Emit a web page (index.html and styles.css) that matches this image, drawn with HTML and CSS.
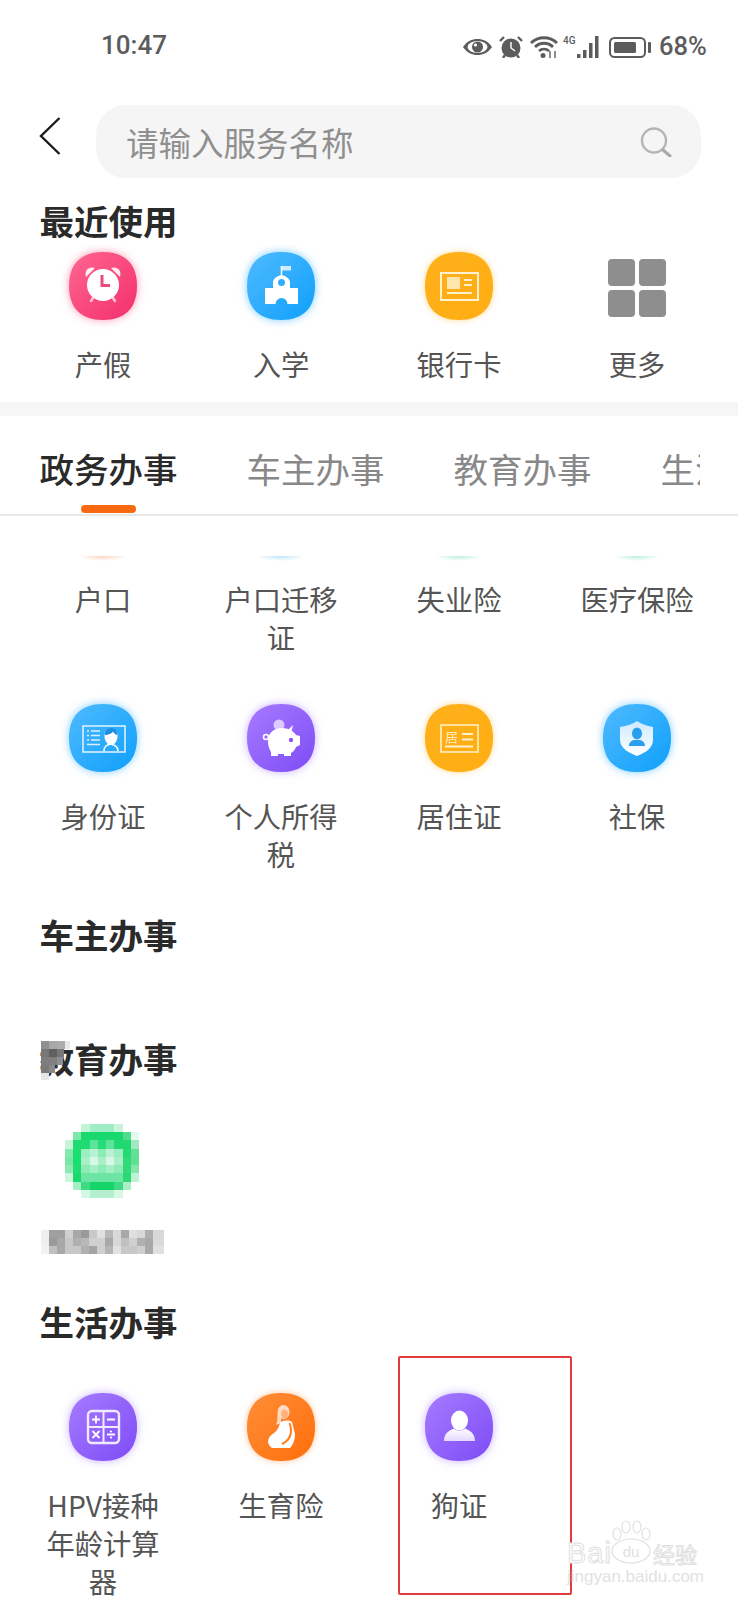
FILE: index.html
```html
<!DOCTYPE html>
<html lang="zh">
<head>
<meta charset="utf-8">
<title>服务</title>
<link rel="stylesheet" href="styles.css">
</head>
<body>
<svg class="defs" width="0" height="0" aria-hidden="true">
  <defs>
    <linearGradient id="gPink" x1="0" y1="0" x2="1" y2="1"><stop offset="0" stop-color="#ff6690"/><stop offset="1" stop-color="#f22f6c"/></linearGradient>
    <linearGradient id="gBlue" x1="0" y1="0" x2="1" y2="1"><stop offset="0" stop-color="#4fbaff"/><stop offset="1" stop-color="#0fa0fb"/></linearGradient>
    <linearGradient id="gYellow" x1="0" y1="0" x2="1" y2="1"><stop offset="0" stop-color="#ffb01a"/><stop offset="1" stop-color="#ffae12"/></linearGradient>
    <linearGradient id="gPurple" x1="0" y1="0" x2="1" y2="1"><stop offset="0" stop-color="#a67bff"/><stop offset="1" stop-color="#7e4cf6"/></linearGradient>
    <linearGradient id="gOrange" x1="0" y1="0" x2="1" y2="1"><stop offset="0" stop-color="#ff8e38"/><stop offset="1" stop-color="#ff6e0a"/></linearGradient>
    <linearGradient id="gPale" x1="0" y1="0" x2="0" y2="1"><stop offset="0" stop-color="#ffffff"/><stop offset="1" stop-color="#e3d8ff"/></linearGradient>
    <linearGradient id="gShield" x1="0" y1="0" x2="0" y2="1"><stop offset="0" stop-color="#cfeaff"/><stop offset="1" stop-color="#ffffff"/></linearGradient>
    <path id="blob" d="M34 0C56 0 68 12 68 34C68 56 56 68 34 68C12 68 0 56 0 34C0 12 12 0 34 0Z"/>
  </defs>
</svg>

<div class="page">
  <header class="status">
    <span class="time">10:47</span>
    <div class="status-icons">
      <svg class="si-eye" viewBox="0 0 29 16"><path d="M0 8C4 2 9 0 14.500 0S25 2 29 8C25 14 20 16 14.500 16S4 14 0 8Z" fill="#5c5c5c"/><ellipse cx="14.500" cy="8" rx="10" ry="6" fill="#fff"/><circle cx="14.500" cy="8" r="5.500" fill="#5c5c5c"/><circle cx="12.500" cy="6" r="1.600" fill="#fff"/></svg>
      <svg class="si-alarm" viewBox="0 0 24 22"><circle cx="12" cy="12" r="9.500" fill="#5c5c5c"/><path d="M12 6V12L16 15" fill="none" stroke="#fff" stroke-width="1.400"/><path d="M1 5L5 1M23 5L19 1M6 19L4 22M18 19L20 22" stroke="#5c5c5c" stroke-width="2.400" fill="none"/></svg>
      <svg class="si-wifi" viewBox="0 0 28 22"><path d="M1 7C8 0 20 0 27 7M5 11C10 6 18 6 23 11M9 15C12 12.500 16 12.500 19 15" fill="none" stroke="#5c5c5c" stroke-width="2.800"/><circle cx="13" cy="19.500" r="2.500" fill="#5c5c5c"/><path d="M20 22V15M25 22V15" stroke="#5c5c5c" stroke-width="1.400"/></svg>
      <div class="si-net">
        <span class="net-label">4G</span>
        <svg class="si-bars" viewBox="0 0 24 22"><path d="M1 18h3.500v4H1zM7 14h3.500v8H7zM13 7h3.500v15H13zM19 0h3.500v22H19z" fill="#5c5c5c"/></svg>
      </div>
      <svg class="si-batt" viewBox="0 0 42 21"><rect x="1" y="1" width="35" height="19" rx="4.500" fill="none" stroke="#5c5c5c" stroke-width="2"/><rect x="5" y="5" width="22" height="11" rx="1.500" fill="#5c5c5c"/><rect x="39" y="5" width="3" height="11" rx="1" fill="#5c5c5c"/></svg>
      <span class="pct">68%</span>
    </div>
  </header>

  <div class="search-row">
    <svg class="back" viewBox="0 0 22 38"><path d="M20.500 1L2 19L20.500 37" fill="none" stroke="#1c1c1c" stroke-width="2.400"/></svg>
    <div class="search">
      <span class="placeholder">请输入服务名称</span>
      <svg class="search-ic" viewBox="0 0 32 30"><circle cx="14" cy="13.500" r="12" fill="none" stroke="#b4b4b4" stroke-width="2.400"/><path d="M23 23L30 29" stroke="#a8a8a8" stroke-width="3" stroke-linecap="round"/></svg>
    </div>
  </div>

  <h2 class="heading heading-recent">最近使用</h2>
  <div class="grid grid-recent">
    <div class="item">
      <svg class="icon glow-pink" viewBox="0 0 68 68"><use href="#blob" fill="url(#gPink)"/>
        <path d="M17 25C15 18 20 14 26 16ZM51 25C53 18 48 14 42 16Z" fill="#fff" opacity=".9"/>
        <path d="M24 46L22 49M44 46L46 49" stroke="#ffc3d5" stroke-width="2.600" stroke-linecap="round"/>
        <circle cx="34" cy="33" r="16" fill="#fff"/>
        <path d="M33 23V33.500H41" fill="none" stroke="#ea4c7c" stroke-width="3"/></svg>
      <span class="label">产假</span>
    </div>
    <div class="item">
      <svg class="icon glow-blue" viewBox="0 0 68 68"><use href="#blob" fill="url(#gBlue)"/>
        <path d="M35 14H44V18.500H35Z" fill="#cfeaff"/><path d="M34.500 14V24" stroke="#fff" stroke-width="1.600"/>
        <path d="M18 36H26V30C26 27 30 24 34.500 23C39 24 43 27 43 30V36H51V52H40.500A6 6 0 0 0 28.500 52H18Z" fill="#fff"/>
        <circle cx="34.500" cy="30.500" r="3.500" fill="#35adfd"/></svg>
      <span class="label">入学</span>
    </div>
    <div class="item">
      <svg class="icon glow-yellow" viewBox="0 0 68 68"><use href="#blob" fill="url(#gYellow)"/>
        <rect x="16" y="21" width="37" height="27" fill="none" stroke="#fff1cf" stroke-width="2"/>
        <rect x="22" y="25" width="13" height="12" fill="#ffe6ad"/>
        <path d="M39 28H47M39 33H47M22 41H47" stroke="#fff1cf" stroke-width="2.200"/></svg>
      <span class="label">银行卡</span>
    </div>
    <div class="item">
      <svg class="icon" viewBox="0 0 68 68"><g fill="#8e8e8e"><rect x="5" y="7" width="27" height="27" rx="4"/><rect x="36" y="7" width="27" height="27" rx="4"/><rect x="5" y="38" width="27" height="27" rx="4"/><rect x="36" y="38" width="27" height="27" rx="4"/></g></svg>
      <span class="label">更多</span>
    </div>
  </div>

  <div class="band"></div>

  <nav class="tabs">
    <div class="tab tab-on"><span>政务办事</span><i class="tab-bar"></i></div>
    <div class="tab"><span>车主办事</span></div>
    <div class="tab"><span>教育办事</span></div>
    <div class="tab"><span>生活办事</span></div>
  </nav>

  <div class="grid grid-slivers">
    <i class="sliver sliver-orange"></i>
    <i class="sliver sliver-blue"></i>
    <i class="sliver sliver-green"></i>
    <i class="sliver sliver-green"></i>
  </div>

  <div class="grid grid-labels">
    <div class="item"><span class="label">户口</span></div>
    <div class="item"><span class="label">户口迁移证</span></div>
    <div class="item"><span class="label">失业险</span></div>
    <div class="item"><span class="label">医疗保险</span></div>
  </div>

  <div class="grid grid-gov">
    <div class="item">
      <svg class="icon glow-blue" viewBox="0 0 68 68"><use href="#blob" fill="url(#gBlue)"/>
        <rect x="14" y="22" width="42" height="26" fill="none" stroke="#d9f0ff" stroke-width="1.600"/>
        <path d="M18 27H20M22 27H31M18 31.500H20M22 31.500H31M18 36H20M22 36H31M18 40.500H31" stroke="#d9f0ff" stroke-width="1.600"/>
        <path d="M35 47C35 42 38 41 41.500 40C45 41 49 42 49 47" fill="none" stroke="#fff" stroke-width="1.600"/>
        <path d="M35.500 32C35.500 26 38 24.500 42 24.500S48.500 27 48.500 32C48.500 37 45.500 41 42 41S35.500 37 35.500 32Z" fill="#fff"/>
        <path d="M36 31C39 31 43 29.500 44 27.500C45 29.500 47 31 48 31C48.500 26 46 24 42 24S35.500 26.500 36 31Z" fill="#1d8fe0"/></svg>
      <span class="label">身份证</span>
    </div>
    <div class="item">
      <svg class="icon glow-purple" viewBox="0 0 68 68"><use href="#blob" fill="url(#gPurple)"/>
        <circle cx="32" cy="21" r="5.500" fill="#dccbff"/>
        <path d="M44 30L46 21L40 27Z" fill="#fff"/>
        <circle cx="19" cy="33" r="2.500" fill="none" stroke="#fff" stroke-width="1.500"/>
        <path d="M21 37C21 29 27 24 35 24C43 24 47 28 49 31L53 32V41L49 43C48 46 46 48 44 49V52H37V50H31V52H24V48C22 45 21 41 21 37Z" fill="#fff"/>
        <circle cx="44" cy="36" r="2.200" fill="#8a58f5"/></svg>
      <span class="label">个人所得税</span>
    </div>
    <div class="item">
      <svg class="icon glow-yellow" viewBox="0 0 68 68"><use href="#blob" fill="url(#gYellow)"/>
        <rect x="16" y="21" width="37" height="27" fill="none" stroke="#ffeec4" stroke-width="1.600"/>
        <text class="ic-text" x="20" y="38">居</text>
        <path d="M37 30H48M37 35.500H48M20 42.500H48" stroke="#fff1cf" stroke-width="1.800"/></svg>
      <span class="label">居住证</span>
    </div>
    <div class="item">
      <svg class="icon glow-blue" viewBox="0 0 68 68"><use href="#blob" fill="url(#gBlue)"/>
        <path d="M34 17C38 20 44 22 50 23V36C50 44 42 49 34 52C26 49 17 44 17 36V23C24 22 30 20 34 17Z" fill="url(#gShield)"/>
        <ellipse cx="34" cy="29.500" rx="5" ry="6" fill="#2a9ff0"/>
        <path d="M26 42C26 38 29 36.500 31 36H37C39 36.500 42 38 42 42Z" fill="#2a9ff0"/></svg>
      <span class="label">社保</span>
    </div>
  </div>

  <h2 class="heading heading-car">车主办事</h2>

  <h2 class="heading heading-edu">教育办事
    <svg class="mosaic-head" viewBox="0 0 32 40" shape-rendering="crispEdges" aria-hidden="true">
      <rect x="0" y="0" width="8" height="8" fill="#909090"/><rect x="8" y="0" width="8" height="8" fill="#a8a8a8"/><rect x="16" y="0" width="8" height="8" fill="#adadad"/><rect x="24" y="0" width="5" height="8" fill="#e8e8e8"/>
      <rect x="0" y="8" width="8" height="8" fill="#777"/><rect x="8" y="8" width="8" height="8" fill="#5f5f5f"/><rect x="16" y="8" width="7" height="8" fill="#777"/>
      <rect x="0" y="16" width="8" height="8" fill="#7e7e7e"/><rect x="8" y="16" width="8" height="8" fill="#808080"/><rect x="16" y="16" width="6" height="8" fill="#8e8e8e"/>
      <rect x="0" y="24" width="8" height="8" fill="#7a7a7a"/><rect x="8" y="24" width="6" height="8" fill="#8a8a8a"/>
      <rect x="0" y="32" width="8" height="7" fill="#e6e6e6"/>
    </svg>
  </h2>
  <div class="grid grid-edu">
    <div class="item">
      <svg class="mosaic-ic" viewBox="0 0 72 72" shape-rendering="crispEdges" role="img" aria-label="已打码的图标">
        <rect x="16" y="0" width="8" height="8" fill="#c2f5d8"/><rect x="24" y="0" width="24" height="8" fill="#a0ecc4"/><rect x="48" y="0" width="8" height="8" fill="#c8f5da"/>
        <rect x="8" y="8" width="8" height="8" fill="#7ee8a8"/><rect x="16" y="8" width="40" height="8" fill="#18d86e"/><rect x="56" y="8" width="8" height="8" fill="#4fdd8d"/><rect x="64" y="8" width="8" height="8" fill="#e4f9ee"/>
        <rect x="0" y="16" width="8" height="8" fill="#c8f5da"/><rect x="8" y="16" width="16" height="8" fill="#1fdc72"/><rect x="24" y="16" width="8" height="8" fill="#5ce49a"/><rect x="32" y="16" width="8" height="8" fill="#25dd78"/><rect x="40" y="16" width="8" height="8" fill="#5ce49a"/><rect x="48" y="16" width="16" height="8" fill="#22d872"/><rect x="64" y="16" width="8" height="8" fill="#9eeabe"/>
        <rect x="0" y="24" width="8" height="8" fill="#85e8ae"/><rect x="8" y="24" width="8" height="8" fill="#19de70"/><rect x="16" y="24" width="8" height="8" fill="#9aeebf"/><rect x="24" y="24" width="8" height="8" fill="#b8f2d2"/><rect x="32" y="24" width="8" height="8" fill="#8eecb8"/><rect x="40" y="24" width="8" height="8" fill="#b8f2d2"/><rect x="48" y="24" width="8" height="8" fill="#9aeebf"/><rect x="56" y="24" width="8" height="8" fill="#25d973"/><rect x="64" y="24" width="8" height="8" fill="#63e094"/>
        <rect x="0" y="32" width="8" height="8" fill="#7ae6a6"/><rect x="8" y="32" width="8" height="8" fill="#19de70"/><rect x="16" y="32" width="8" height="8" fill="#a8efc8"/><rect x="24" y="32" width="8" height="8" fill="#d8f8e6"/><rect x="32" y="32" width="8" height="8" fill="#a8efc8"/><rect x="40" y="32" width="8" height="8" fill="#d8f8e6"/><rect x="48" y="32" width="8" height="8" fill="#a8efc8"/><rect x="56" y="32" width="8" height="8" fill="#30d97a"/><rect x="64" y="32" width="8" height="8" fill="#5fe093"/>
        <rect x="0" y="40" width="8" height="8" fill="#8fe9b2"/><rect x="8" y="40" width="8" height="8" fill="#22dc74"/><rect x="16" y="40" width="8" height="8" fill="#8decb6"/><rect x="24" y="40" width="8" height="8" fill="#a5efc6"/><rect x="32" y="40" width="8" height="8" fill="#8decb6"/><rect x="40" y="40" width="8" height="8" fill="#a5efc6"/><rect x="48" y="40" width="8" height="8" fill="#8decb6"/><rect x="56" y="40" width="8" height="8" fill="#30d97a"/><rect x="64" y="40" width="8" height="8" fill="#85e5ab"/>
        <rect x="0" y="48" width="8" height="8" fill="#cdf6de"/><rect x="8" y="48" width="8" height="8" fill="#1ada6e"/><rect x="16" y="48" width="40" height="8" fill="#6de6a5"/><rect x="56" y="48" width="8" height="8" fill="#2bd876"/><rect x="64" y="48" width="8" height="8" fill="#bdf2d4"/>
        <rect x="8" y="56" width="8" height="8" fill="#a5efc4"/><rect x="16" y="56" width="8" height="8" fill="#3ddb83"/><rect x="24" y="56" width="24" height="8" fill="#15d569"/><rect x="48" y="56" width="8" height="8" fill="#3ddb83"/><rect x="56" y="56" width="8" height="8" fill="#aaeec8"/>
        <rect x="16" y="64" width="8" height="8" fill="#d4f8e3"/><rect x="24" y="64" width="24" height="8" fill="#b4f0cf"/><rect x="48" y="64" width="8" height="8" fill="#d8f8e6"/>
      </svg>
      <svg class="mosaic-txt" viewBox="0 0 123 24" shape-rendering="crispEdges" role="img" aria-label="已打码的文字">
        <rect x="0" y="0" width="8" height="8" fill="#efefef"/><rect x="8" y="0" width="16" height="8" fill="#a0a0a0"/><rect x="24" y="0" width="8" height="8" fill="#d0d0d0"/><rect x="32" y="0" width="8" height="8" fill="#a8a8a8"/><rect x="40" y="0" width="8" height="8" fill="#9a9a9a"/><rect x="48" y="0" width="8" height="8" fill="#c8c8c8"/><rect x="56" y="0" width="8" height="8" fill="#e0e0e0"/><rect x="64" y="0" width="8" height="8" fill="#b8b8b8"/><rect x="72" y="0" width="8" height="8" fill="#d8d8d8"/><rect x="80" y="0" width="8" height="8" fill="#a8a8a8"/><rect x="88" y="0" width="8" height="8" fill="#e0e0e0"/><rect x="96" y="0" width="8" height="8" fill="#d8d8d8"/><rect x="104" y="0" width="8" height="8" fill="#b0b0b0"/><rect x="112" y="0" width="11" height="8" fill="#d8d8d8"/>
        <rect x="0" y="8" width="8" height="8" fill="#efefef"/><rect x="8" y="8" width="8" height="8" fill="#9a9a9a"/><rect x="16" y="8" width="8" height="8" fill="#a8a8a8"/><rect x="24" y="8" width="8" height="8" fill="#c8c8c8"/><rect x="32" y="8" width="8" height="8" fill="#b0b0b0"/><rect x="40" y="8" width="8" height="8" fill="#b8b8b8"/><rect x="48" y="8" width="16" height="8" fill="#d0d0d0"/><rect x="64" y="8" width="8" height="8" fill="#a8a8a8"/><rect x="72" y="8" width="8" height="8" fill="#d8d8d8"/><rect x="80" y="8" width="8" height="8" fill="#c0c0c0"/><rect x="88" y="8" width="8" height="8" fill="#d0d0d0"/><rect x="96" y="8" width="8" height="8" fill="#b0b0b0"/><rect x="104" y="8" width="8" height="8" fill="#a8a8a8"/><rect x="112" y="8" width="11" height="8" fill="#dadada"/>
        <rect x="0" y="16" width="8" height="8" fill="#f2f2f2"/><rect x="8" y="16" width="8" height="8" fill="#c0c0c0"/><rect x="16" y="16" width="8" height="8" fill="#a8a8a8"/><rect x="24" y="16" width="16" height="8" fill="#c8c8c8"/><rect x="40" y="16" width="8" height="8" fill="#b0b0b0"/><rect x="48" y="16" width="8" height="8" fill="#a4a4a4"/><rect x="56" y="16" width="8" height="8" fill="#cfcfcf"/><rect x="64" y="16" width="8" height="8" fill="#b4b4b4"/><rect x="72" y="16" width="8" height="8" fill="#e2e2e2"/><rect x="80" y="16" width="16" height="8" fill="#c8c8c8"/><rect x="96" y="16" width="8" height="8" fill="#cfcfcf"/><rect x="104" y="16" width="8" height="8" fill="#a8a8a8"/><rect x="112" y="16" width="11" height="8" fill="#e0e0e0"/>
      </svg>
    </div>
  </div>

  <h2 class="heading heading-life">生活办事</h2>
  <div class="grid">
    <div class="item">
      <svg class="icon glow-purple" viewBox="0 0 68 68"><use href="#blob" fill="url(#gPurple)"/>
        <rect x="19" y="18" width="31" height="32" rx="4" fill="none" stroke="#f1eaff" stroke-width="2.400"/>
        <path d="M34.500 18V50M19 34H50" stroke="#f1eaff" stroke-width="2"/>
        <path d="M23 26.500H31M27 22.500V30.500M38 26.500H46M23.500 38L30.500 45M30.500 38L23.500 45M38 41.500H46" stroke="#fff" stroke-width="1.800"/>
        <circle cx="42" cy="38.500" r="1.100" fill="#fff"/><circle cx="42" cy="44.500" r="1.100" fill="#fff"/></svg>
      <span class="label">HPV接种年龄计算器</span>
    </div>
    <div class="item">
      <svg class="icon glow-orange" viewBox="0 0 68 68"><use href="#blob" fill="url(#gOrange)"/>
        <ellipse cx="36.500" cy="19" rx="6" ry="7" fill="#ffdcc3"/>
        <path d="M31 19C30 24 31 28 29 32L34 30V19Z" fill="#ffdcc3"/>
        <ellipse cx="37.500" cy="21" rx="3.500" ry="4.500" fill="#ffb27a"/>
        <path d="M33 30C36 27 42 27 45 29L48 41C48 47 46 52 43 55H25C19 51 20 44 27 40C30 38 32 34 33 30Z" fill="#fff"/>
        <path d="M42.500 30C46 40 43 47 35 51" fill="none" stroke="#ff7f20" stroke-width="2"/></svg>
      <span class="label">生育险</span>
    </div>
    <div class="item">
      <svg class="icon glow-purple" viewBox="0 0 68 68"><use href="#blob" fill="url(#gPurple)"/>
        <ellipse cx="34.500" cy="27.500" rx="8.500" ry="10" fill="#fff"/>
        <path d="M19 48C19 41 23 38 29 35.500C32 38.500 37 38.500 40 35.500C46 38 50 41 50 48Z" fill="url(#gPale)"/></svg>
      <span class="label">狗证</span>
    </div>
  </div>

  <div class="highlight"></div>
  <div class="watermark">
    <span class="wm-bai">Bai</span>
    <svg class="wm-paw" viewBox="0 0 44 44"><g fill="#fff" stroke="#e0e0e0" stroke-width="1.200"><ellipse cx="8" cy="14" rx="4" ry="6"/><ellipse cx="17" cy="7" rx="4" ry="6"/><ellipse cx="28" cy="7" rx="4" ry="6"/><ellipse cx="37" cy="14" rx="4" ry="6"/><ellipse cx="22" cy="31" rx="19" ry="12"/></g><text class="wm-du" x="22" y="37" text-anchor="middle">du</text></svg>
    <span class="wm-jy">经验</span>
    <span class="wm-url">jingyan.baidu.com</span>
  </div>
</div>
</body>
</html>
```

FILE: styles.css
```css
* { box-sizing: border-box; }
html, body { margin: 0; padding: 0; background: #fff; }
body { font-family: "Noto Sans CJK SC", "Noto Sans", sans-serif; color: #555; }
.defs { display: block; }
.page { position: relative; width: 738px; height: 1600px; overflow: hidden; background: #fff; }

/* status bar */
.status { display: flex; align-items: center; justify-content: space-between; height: 94px; padding: 0 31px 0 101px; margin-bottom: 11px; font-family: Roboto, "Liberation Sans", sans-serif; color: #5c5c5c; }
.time { font-size: 26px; font-weight: 500; margin-bottom: 4px; }
.status-icons { display: flex; align-items: center; }
.si-eye { width: 29px; height: 16px; margin-right: 7px; }
.si-alarm { width: 24px; height: 22px; margin-right: 7px; }
.si-wifi { width: 28px; height: 22px; margin-right: 5px; }
.si-net { display: flex; align-items: flex-start; width: 37px; height: 22px; margin-right: 9px; }
.net-label { font-size: 10px; line-height: 10px; width: 13px; font-weight: 500; }
.si-bars { width: 24px; height: 22px; }
.si-batt { width: 42px; height: 21px; margin-right: 8px; }
.pct { font-size: 25.500px; font-weight: 500; width: 48px; white-space: nowrap; margin-bottom: 2px; }

/* search */
.search-row { display: flex; align-items: center; gap: 35px; padding: 0 37px 0 39px; }
.back { width: 22px; height: 38px; flex: none; margin-bottom: 12px; }
.search { flex: 1; height: 73px; display: flex; align-items: center; justify-content: space-between; padding: 0 29px 0 30px; background: #f5f5f5; border-radius: 30px; }
.placeholder { font-size: 32.500px; line-height: 44px; color: #8f8f8f; white-space: nowrap; }
.search-ic { width: 32px; height: 30px; }

/* headings */
.heading { margin: 0; padding-left: 39.500px; font-size: 34.500px; line-height: 46px; font-weight: 700; color: #2a2a2a; }
.heading-recent { margin-top: 19px; margin-bottom: 9px; }
.heading-car { margin-top: 38px; }
.heading-edu { position: relative; margin-top: 78px; margin-bottom: 43px; }
.heading-life { margin-top: 44px; margin-bottom: 49px; }
.mosaic-head { position: absolute; left: 41px; top: 6px; width: 32px; height: 40px; }

/* grids */
.grid { display: grid; grid-template-columns: repeat(4, 178px); padding: 0 12px 0 14px; }
.item { display: flex; flex-direction: column; align-items: center; }
.icon { display: block; width: 68px; height: 68px; margin-bottom: 25px; overflow: visible; }
.label { display: block; width: 122px; font-size: 28.300px; line-height: 38px; text-align: center; color: #555; }
.ic-text { font-size: 13px; fill: #ffeec4; }

.glow-pink { filter: drop-shadow(0 0 4px rgba(255, 70, 120, .55)); }
.glow-blue { filter: drop-shadow(0 0 4px rgba(40, 170, 255, .6)); }
.glow-yellow { filter: drop-shadow(0 0 3px rgba(255, 180, 30, .5)); }
.glow-purple { filter: drop-shadow(0 0 4px rgba(150, 100, 255, .5)); }
.glow-orange { filter: drop-shadow(0 0 3px rgba(255, 130, 40, .5)); }

.band { height: 14px; margin-top: 19px; background: #f6f6f6; }

/* tabs */
.tabs { display: flex; gap: 69px; width: 700px; height: 100px; padding: 29px 0 0 39.500px; overflow: hidden; }
.tab { flex: none; display: flex; flex-direction: column; font-size: 34.500px; line-height: 46px; color: #888; }
.tab-on { color: #2a2a2a; font-weight: 500; }
.tab-bar { display: block; width: 55px; height: 8px; margin: 14px auto 0; border-radius: 4px; background: #f96a10; }
.grid-slivers { border-top: 2px solid #e8e8e8; margin-top: -2px; padding-top: 40px; height: 47px; justify-items: center; align-items: end; }
.sliver { display: block; width: 48px; height: 5px; }
.sliver-orange { background: radial-gradient(ellipse 50% 100% at 50% 0, #fbd3bb, rgba(255, 255, 255, 0)); }
.sliver-blue { background: radial-gradient(ellipse 50% 100% at 50% 0, #bfe3fa, rgba(255, 255, 255, 0)); }
.sliver-green { background: radial-gradient(ellipse 50% 100% at 50% 0, #bdeedb, rgba(255, 255, 255, 0)); }

.grid-labels { margin-top: 19px; }
.grid-gov { margin-top: 48px; }

.mosaic-ic { display: block; width: 74px; height: 74px; margin: 0 0 32px 24px; }
.grid-edu .item { align-items: flex-start; margin-left: 27px; }
.mosaic-txt { display: block; width: 123px; height: 24px; }

/* annotation and watermark */
.highlight { position: absolute; left: 398px; top: 1356px; width: 174px; height: 239px; border: 2px solid #e23b3b; border-radius: 2px; }
.watermark { position: absolute; left: 566px; top: 1519px; width: 134px; height: 70px; color: #fff; }
.wm-bai { position: absolute; left: 1px; top: 19px; font-family: "Liberation Sans", sans-serif; font-size: 29px; line-height: 30px; letter-spacing: 1px; -webkit-text-stroke: 1px #e0e0e0; }
.wm-paw { position: absolute; left: 43px; top: 1px; width: 44px; height: 44px; }
.wm-du { font-family: "Liberation Sans", sans-serif; font-size: 15px; fill: #e0e0e0; }
.wm-jy { position: absolute; left: 87px; top: 20px; font-size: 22px; line-height: 28px; -webkit-text-stroke: 1px #e0e0e0; white-space: nowrap; }
.wm-url { position: absolute; left: 1px; top: 47px; font-family: "Liberation Sans", sans-serif; font-size: 17px; line-height: 22px; color: #e2e2e2; white-space: nowrap; }
```
